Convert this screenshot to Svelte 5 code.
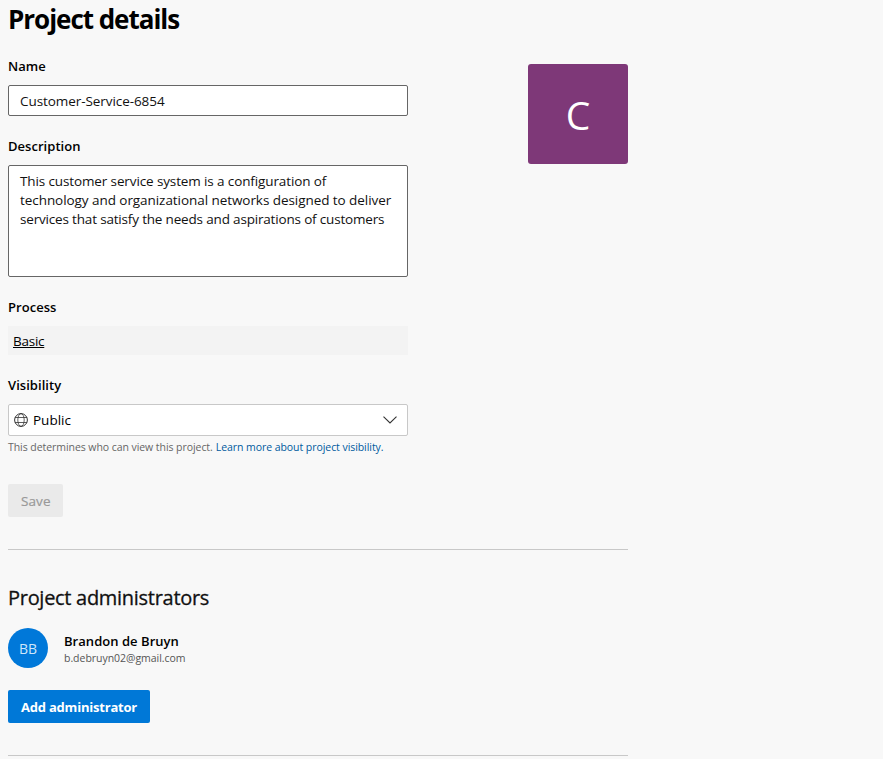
<script>
  const project = {
    name: 'Customer-Service-6854',
    description: [
      { text: 'This customer service system is a configuration of', tracking: -0.12 },
      { text: 'technology and organizational networks designed to deliver', tracking: -0.06 },
      { text: 'services that satisfy the needs and aspirations of customers', tracking: -0.175 }
    ]
  };
</script>

<main>
  <h1>Project details</h1>
  <section class="details">
    <div class="form">
      <div class="label name-label">Name</div>
      <div class="box input">{project.name}</div>

      <div class="label">Description</div>
      <div class="box area">
        {#each project.description as line}
          <div class="line" style="letter-spacing: {line.tracking}px">{line.text}</div>
        {/each}
      </div>

      <div class="label">Process</div>
      <div class="process"><a href="#process">Basic</a></div>

      <div class="label">Visibility</div>
      <div class="select">
        <svg class="globe" width="14" height="14" viewBox="0 0 14 14" fill="none" stroke="#333" stroke-width="1">
          <circle cx="7" cy="7" r="6.4" />
          <ellipse cx="7" cy="7" rx="3.2" ry="6.4" stroke-opacity=".75" />
          <path d="M1 4.5H13M1 9.5H13" stroke-opacity=".8" />
        </svg>
        <span class="public">Public</span>
        <svg class="chevron" width="14" height="8" viewBox="0 0 14 8" fill="none" stroke="#333" stroke-width="1.1">
          <path d="M.5 .6L7 7L13.5 .6" />
        </svg>
      </div>
      <div class="hint"><span>This determines who can view this project.</span><a href="#learn">Learn more about project visibility.</a></div>

      <button class="save" disabled>Save</button>
    </div>
    <div class="tile">C</div>
  </section>

  <section class="admins">
    <h2>Project administrators</h2>
    <div class="person">
      <div class="avatar">BB</div>
      <div class="who">
        <div class="pname">Brandon de Bruyn</div>
        <div class="mail">b.debruyn02@gmail.com</div>
      </div>
    </div>
    <button class="add">Add administrator</button>
  </section>
</main>

<style>
  :global(body) { background: #f8f8f8; }
  main {
    box-sizing: border-box;
    width: 636px;
    height: 759px;
    padding: 0 8px;
    overflow: hidden;
    font-family: 'Open Sans', 'Noto Sans', sans-serif;
    font-size: 13.5px;
    color: #111;
    white-space: nowrap;
  }
  h1 { margin: 0; height: 40px; line-height: 39px; font-size: 26px; font-weight: 700; letter-spacing: -1.03px; color: #000; }
  .details { display: flex; justify-content: space-between; height: 509px; border-bottom: 1px solid #c8c8c8; }
  .form { width: 400px; }
  .label { height: 20px; line-height: 20px; margin: 20px 0 9px; font-size: 13px; font-weight: 600; letter-spacing: .04px; color: #000; }
  .name-label { margin-top: 16px; }
  .box { box-sizing: border-box; background: #fff; border: 1px solid #666; border-radius: 2px; padding: 0 11px; }
  .input { height: 31px; line-height: 30px; letter-spacing: -.07px; }
  .area { height: 112px; padding-top: 6px; }
  .line { height: 19px; line-height: 19px; }
  .process { box-sizing: border-box; height: 29px; line-height: 29px; background: #f3f3f3; padding: 1px 0 0 5px; }
  .process a { color: #000; letter-spacing: -.25px; text-underline-offset: 1px; }
  .select {
    box-sizing: border-box;
    display: flex;
    align-items: center;
    height: 32px;
    padding: 0 10px 0 5px;
    background: #fff;
    border: 1px solid #c8c8c8;
    border-radius: 2px;
  }
  .public { margin-left: 5px; color: #000; }
  .chevron { margin-left: auto; }
  .hint { display: flex; gap: 3px; height: 16px; line-height: 16px; margin-top: 3px; font-size: 10.5px; letter-spacing: -.06px; color: #666; }
  .hint a { color: #005a9e; text-decoration: none; }
  button { display: flex; align-items: center; border: 0; border-radius: 2px; height: 33px; padding: 0 13px; font-family: inherit; white-space: nowrap; }
  .save { width: 55px; margin-top: 29px; background: #eaeaea; color: #999; font-size: 13.5px; letter-spacing: .1px; -webkit-text-stroke: .2px #999; }
  .tile {
    display: flex; align-items: center; justify-content: center;
    box-sizing: border-box; width: 100px; height: 100px; margin-top: 24px; border-radius: 3px;
    background: #7e3878; color: #fff; font-size: 39px;
  }
  h2 { margin: 34px 0 0; height: 28px; line-height: 28px; font-size: 20px; font-weight: 400; letter-spacing: -.29px; -webkit-text-stroke: .3px #111; }
  .admins { height: 205px; border-bottom: 1px solid #c8c8c8; display: flow-root; }
  .person { display: flex; margin-top: 16px; height: 40px; }
  .avatar {
    display: flex; align-items: center; justify-content: center;
    width: 40px; height: 40px; border-radius: 50%; background: #0078d9; color: #cfe6fa; font-size: 14px;
  }
  .who { margin-left: 16px; padding-top: 3px; }
  .pname { height: 19px; line-height: 20px; font-weight: 600; font-size: 13px; letter-spacing: .04px; color: #000; }
  .mail { height: 16px; line-height: 16px; font-size: 10.5px; letter-spacing: -.03px; color: #555; }
  .add { width: 142px; margin-top: 22px; background: #0078d7; color: #fff; font-size: 13px; font-weight: 700; letter-spacing: -.21px; }
</style>
